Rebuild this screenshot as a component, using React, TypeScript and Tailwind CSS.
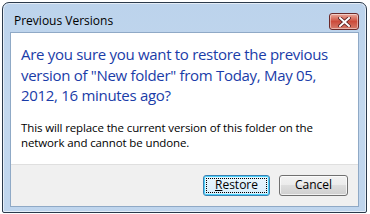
import React from "react";

export default function App() {
  const font = { fontFamily: '"Segoe UI", "Open Sans", "Noto Sans", sans-serif' };
  return (
    <div className="w-[370px] h-[214px] bg-white" style={font}>
      <div className="ml-[2px] pt-[2px] w-[365px]">
        <div className="w-[365px] h-[211px] rounded-t-[7px] rounded-b-[2px] border border-[#2b3a4c] bg-gradient-to-b from-[#bcd3ec] via-[#c3d8ee] to-[#bfd5ed] flex flex-col shadow-[inset_0_0_0_1px_rgba(255,255,255,0.6)]">
          <div className="h-[29px] flex items-start justify-between pl-[11px] pr-[7px]">
            <span className="text-[12px] leading-[16px] text-black mt-[10px]">Previous Versions</span>
            <div className="mt-[10px] w-[30px] h-[17px] rounded-[3px] border border-[#6b2a2a] bg-gradient-to-b from-[#e9a99c] via-[#cc4b3b] to-[#d47a6a] flex items-center justify-center shadow-[inset_0_0_0_1px_rgba(255,255,255,0.45)]">
              <svg width="13" height="10" viewBox="0 0 13 10">
                <path d="M2 1 L11 9 M11 1 L2 9" stroke="#5a2020" strokeWidth="3.6" strokeLinecap="square" />
                <path d="M2 1 L11 9 M11 1 L2 9" stroke="#ffffff" strokeWidth="2" strokeLinecap="square" />
              </svg>
            </div>
          </div>
          <div className="mx-[7px] flex-1 mb-[5px] border border-[#8fa9c6] bg-white flex flex-col">
            <div className="flex-1 px-[10px] pt-[11px]">
              <p className="text-[15px] tracking-[-0.3px] leading-[20.5px] text-[#1a3ca8]">
                Are you sure you want to restore the previous version of "New folder" from Today, May 05, 2012, 16 minutes ago?
              </p>
              <p className="mt-[14px] text-[11.5px] tracking-[-0.12px] leading-[15px] text-black">
                This will replace the current version of this folder on the network and cannot be undone.
              </p>
            </div>
            <div className="h-[42px] bg-[#f0f0f0] border-t border-[#dfdfdf] flex items-center justify-end gap-[9px] pr-[10px] pb-[1px]">
              <button className="w-[67px] h-[21px] rounded-[3px] border border-[#3c7fb1] bg-gradient-to-b from-[#eaf6fd] to-[#d9eefb] text-[12px] text-black flex items-center justify-center p-[2px] shadow-[inset_0_0_0_1px_#48d1fb]">
                <span className="w-full h-full border border-dotted border-black flex items-center justify-center leading-none">
                  <span><span className="underline">R</span>estore</span>
                </span>
              </button>
              <button className="w-[69px] h-[21px] rounded-[3px] border border-[#707070] bg-[linear-gradient(#f2f2f2_0%,#ebebeb_50%,#dddddd_50%,#cfcfcf_100%)] text-[12px] text-black flex items-center justify-center leading-none shadow-[inset_0_0_0_1px_rgba(255,255,255,0.7)]">
                Cancel
              </button>
            </div>
          </div>
        </div>
      </div>
    </div>
  );
}
